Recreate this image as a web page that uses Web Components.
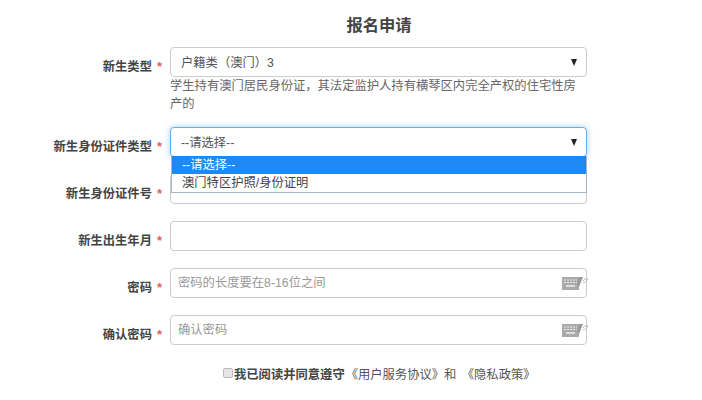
<!DOCTYPE html>
<html lang="zh">
<head>
<meta charset="utf-8">
<style>
    html, body { margin: 0; background: #fff; }
    body {
        font-family: "Liberation Sans", "Noto Sans CJK SC", sans-serif;
        font-size: 12.3px;
        color: #555;
        height: 400px;
        overflow: hidden;
    }
</style>
</head>
<body>
<signup-form>
    <form-row label="新生类型">
        <select-box value="户籍类（澳门）3"></select-box>
        <span slot="help">学生持有澳门居民身份证，其法定监护人持有横琴区内完全产权的住宅性房产的</span>
    </form-row>
    <form-row label="新生身份证件类型">
        <select-box value="--请选择--" open></select-box>
    </form-row>
    <form-row label="新生身份证件号"><text-field></text-field></form-row>
    <form-row label="新生出生年月"><text-field></text-field></form-row>
    <form-row label="密码"><text-field placeholder="密码的长度要在8-16位之间" keyboard></text-field></form-row>
    <form-row label="确认密码"><text-field placeholder="确认密码" keyboard></text-field></form-row>
</signup-form>

<script>
class SignupForm extends HTMLElement {
    constructor() {
        super();
        this.attachShadow({ mode: 'open' });
    }

    connectedCallback() {
        this.shadowRoot.innerHTML = `
            <style>
                :host { display: block; width: 702px; }
                h1 {
                    margin: 0;
                    padding-top: 14px;
                    height: 33px;
                    font-size: 16.3px;
                    line-height: 22px;
                    font-weight: bold;
                    color: #444;
                    text-align: center;
                    padding-left: 56px;
                }
                .rows { display: flex; flex-direction: column; gap: 17px; }
                .agree {
                    display: flex;
                    align-items: center;
                    margin-top: 15px;
                    padding-left: 223px;
                    height: 28px;
                    font-size: 12.3px;
                    color: #555;
                }
                .box {
                    width: 8px;
                    height: 8px;
                    border: 1px solid #bbb;
                    border-radius: 2px;
                    background: #e6e6e6;
                    margin-right: 1px;
                    margin-top: -3px;
                }
                b { color: #444; }
                .links { margin-left: 1px; word-spacing: 2px; }
            </style>
            <h1>报名申请</h1>
            <div class="rows"><slot></slot></div>
            <div class="agree">
                <span class="box"></span>
                <b>我已阅读并同意遵守</b><span class="links">《用户服务协议》和 《隐私政策》</span>
            </div>
        `;
    }
}

class FormRow extends HTMLElement {
    constructor() {
        super();
        this.attachShadow({ mode: 'open' });
    }

    connectedCallback() {
        this.shadowRoot.innerHTML = `
            <style>
                :host { display: grid; grid-template-columns: 170px 417px; }
                .label {
                    height: 30px;
                    padding: 8px 8px 0 0;
                    box-sizing: border-box;
                    display: flex;
                    justify-content: flex-end;
                    align-items: center;
                    font-size: 12.3px;
                    font-weight: bold;
                    color: #444;
                }
                .star { color: #e4604f; margin-left: 5px; font-size: 13px; }
                .help {
                    display: block;
                    color: #666;
                    font-size: 12.3px;
                    line-height: 18px;
                }
                ::slotted([slot="help"]) { display: block; padding-right: 8px; margin-bottom: -3px; }
            </style>
            <div class="label"><span>${this.getAttribute('label')}</span><span class="star">*</span></div>
            <div>
                <slot></slot>
                <div class="help"><slot name="help"></slot></div>
            </div>
        `;
    }
}

class SelectBox extends HTMLElement {
    constructor() {
        super();
        this.attachShadow({ mode: 'open' });
    }

    connectedCallback() {
        const open = this.hasAttribute('open');
        this.shadowRoot.innerHTML = `
            <style>
                :host { display: block; position: relative; }
                .field {
                    height: 30px;
                    box-sizing: border-box;
                    display: flex;
                    align-items: center;
                    justify-content: space-between;
                    padding: 0 9px 0 10px;
                    border: 1px solid #ccc;
                    border-radius: 4px;
                    background: #fff;
                    font-size: 12.3px;
                    color: #555;
                }
                :host([open]) .field {
                    border-color: #66afe9;
                    box-shadow: 0 0 6px rgba(102, 175, 233, .6);
                }
                .arrow {
                    width: 0;
                    height: 0;
                    border-left: 3.5px solid transparent;
                    border-right: 3.5px solid transparent;
                    border-top: 7px solid #222;
                }
                .menu {
                    position: absolute;
                    left: 1px;
                    right: 0;
                    top: 29px;
                    z-index: 5;
                    background: #fff;
                    border: 1px solid #a9b4c4;
                    border-top: 0;
                    font-size: 12.3px;
                    line-height: 18px;
                    color: #444;
                }
                .menu div { padding-left: 10px; height: 18px; }
                .menu .on { background: #1e88f5; color: #fff; }
            </style>
            <div class="field"><span>${this.getAttribute('value')}</span><span class="arrow"></span></div>
            ${open ? `<div class="menu"><div class="on">--请选择--</div><div>澳门特区护照/身份证明</div></div>` : ''}
        `;
    }
}

class TextField extends HTMLElement {
    constructor() {
        super();
        this.attachShadow({ mode: 'open' });
    }

    connectedCallback() {
        const placeholder = this.getAttribute('placeholder') || '';
        const keyboard = this.hasAttribute('keyboard') ? `
            <svg class="kbd" width="27" height="14" viewBox="0 0 27 14">
                <rect x="0" y="1" width="17" height="13" fill="#aaa"/>
                <path d="M2 4h13M2 6.5h13" stroke="#eee" stroke-width="1" stroke-dasharray="2 1"/>
                <path d="M4 10h9" stroke="#eee" stroke-width="1.5"/>
                <path d="M15 8l2-7h4l-4 10z" fill="#999"/>
                <path d="M21 5c1-2 3-3 5-2-1 2-3 4-5 4" fill="none" stroke="#bbb" stroke-width="1"/>
            </svg>` : '';
        this.shadowRoot.innerHTML = `
            <style>
                :host { display: block; position: relative; }
                .field {
                    height: 30px;
                    box-sizing: border-box;
                    display: flex;
                    align-items: center;
                    padding: 0 0 2px 7px;
                    border: 1px solid #ccc;
                    border-radius: 4px;
                    font-size: 12.3px;
                    color: #999;
                }
                .kbd { position: absolute; right: -2px; top: 8px; }
            </style>
            <div class="field">${placeholder}</div>
            ${keyboard}
        `;
    }
}

customElements.define('signup-form', SignupForm);
customElements.define('form-row', FormRow);
customElements.define('select-box', SelectBox);
customElements.define('text-field', TextField);
</script>
</body>
</html>
